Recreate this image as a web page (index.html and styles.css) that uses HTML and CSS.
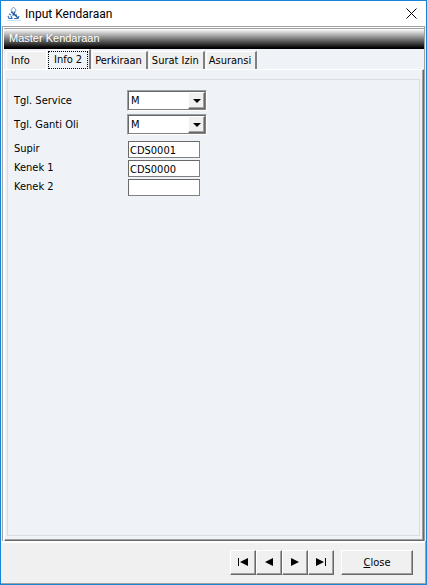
FILE: index.html
```
<!DOCTYPE html>
<html lang="id">
<head>
    <meta charset="UTF-8">
    <meta name="viewport" content="width=device-width, initial-scale=1.0">
    <title>Input Kendaraan</title>
    <link rel="stylesheet" href="styles.css">
</head>
<body>

<div class="window">
    <header class="title-bar">
        <svg class="app-icon" width="16" height="16" viewBox="0 0 16 16" fill="none">
            <path d="M6 1.5L4 4L5 6H8L9 4L7 1.5Z" stroke="#6aa5dc"/>
            <path d="M4 6L7 8L11 12M8 6L6 9L10 9" stroke="#1c4f94" stroke-width="1.2"/>
            <path d="M2 8L4 9M1 10L2 12.5H5L4 10M7 12.5H11L12 10" stroke="#2f75bd" stroke-width="1.2"/>
            <path d="M0 14.5H14" stroke="#bfe3fa"/>
        </svg>
        <span class="title">Input Kendaraan</span>
        <button type="button" class="close-x" aria-label="Tutup">
            <svg width="11" height="11" viewBox="0 0 11 11"><path d="M.5 .5L10.5 10.5M10.5 .5L.5 10.5" stroke="#000"/></svg>
        </button>
    </header>

    <main class="panel">
        <h1>Master Kendaraan</h1>
        <div class="tabs" role="tablist">
            <button type="button" class="tab first" role="tab">Info</button>
            <button type="button" class="tab active" role="tab" aria-selected="true"><span>Info 2</span></button>
            <button type="button" class="tab" role="tab">Perkiraan</button>
            <button type="button" class="tab" role="tab">Surat Izin</button>
            <button type="button" class="tab" role="tab">Asuransi</button>
        </div>
        <div class="tab-page" role="tabpanel">
            <form class="group">
                <div class="row select-row">
                    <label for="service">Tgl. Service</label>
                    <div class="combo">
                        <select id="service" name="service"><option>M</option></select>
                        <span class="arrow"></span>
                    </div>
                </div>
                <div class="row select-row">
                    <label for="oli">Tgl. Ganti Oli</label>
                    <div class="combo">
                        <select id="oli" name="oli"><option>M</option></select>
                        <span class="arrow"></span>
                    </div>
                </div>
                <div class="row input-row">
                    <label for="supir">Supir</label>
                    <input type="text" id="supir" name="supir" value="CDS0001">
                </div>
                <div class="row input-row">
                    <label for="kenek1">Kenek 1</label>
                    <input type="text" id="kenek1" name="kenek1" value="CDS0000">
                </div>
                <div class="row input-row">
                    <label for="kenek2">Kenek 2</label>
                    <input type="text" id="kenek2" name="kenek2">
                </div>
            </form>
        </div>
    </main>

    <footer class="footer">
        <div class="nav">
            <button type="button" class="btn" aria-label="Pertama">
                <svg width="12" height="8" viewBox="0 0 12 8"><path d="M1 0h1v8H1zM11 0v8L3 4z"/></svg>
            </button>
            <button type="button" class="btn" aria-label="Sebelumnya">
                <svg width="12" height="8" viewBox="0 0 12 8"><path d="M10 0v8L2 4z"/></svg>
            </button>
            <button type="button" class="btn" aria-label="Berikutnya">
                <svg width="12" height="8" viewBox="0 0 12 8"><path d="M2 0v8l8-4z"/></svg>
            </button>
            <button type="button" class="btn" aria-label="Terakhir">
                <svg width="12" height="8" viewBox="0 0 12 8"><path d="M1 0v8l8-4zM10 0h1v8h-1z"/></svg>
            </button>
        </div>
        <button type="button" class="btn btn-close"><span><u>C</u>lose</span></button>
    </footer>
</div>

</body>
</html>
```
FILE: styles.css
```
* {
    box-sizing: border-box;
}
body {
    margin: 0;
    font-family: "DejaVu Sans Condensed", Tahoma, sans-serif;
    font-size: 11px;
    line-height: 13px;
    color: #000;
}
button, input, select {
    font: inherit;
    color: inherit;
    margin: 0;
    padding: 0;
    border-radius: 0;
}
.window {
    display: flex;
    flex-direction: column;
    min-height: 100vh;
    border: 1px solid #1883d7;
    background-color: #f0f0f0;
}

/* title bar */
.title-bar {
    display: flex;
    align-items: center;
    height: 25px;
    padding: 0 9px 0 6px;
    background-color: #fff;
}
.title {
    flex: 1;
    margin-left: 2px;
    font-family: Roboto, "Segoe UI", sans-serif;
    font-size: 12px;
    line-height: 16px;
}
.close-x {
    display: flex;
    border: none;
    background: none;
}

/* main panel */
.panel {
    flex: 1;
    display: flex;
    flex-direction: column;
    margin: 0 1px;
    border: 1px solid #a0a0a0;
    border-bottom: none;
    background-color: #eff3f7;
    box-shadow: inset 1px 1px #fff;
    padding: 1px 0 0 1px;
}
h1 {
    height: 21px;
    margin: 0;
    padding: 3px 5px;
    border-top: 1px solid #a0a0a0;
    background: linear-gradient(#fff, #000 95%);
    color: #fff;
    font-family: "Liberation Sans", Arial, sans-serif;
    font-size: 11px;
    font-weight: normal;
}
.tabs {
    display: flex;
    align-items: flex-end;
    height: 20px;
    padding-left: 2px;
}
.tab {
    height: 18px;
    padding: 0 4px 0 2px;
    border: solid #fff;
    border-width: 1px 2px 0 1px;
    border-right-color: #808080;
    background-color: #f0f0f0;
    margin-right: 1px;
}
.tab.first {
    width: 40px;
    padding-left: 4px;
    text-align: left;
    border-right: none;
    margin-right: 0;
}
.tab.active {
    height: 20px;
    padding: 0 1px;
    background-color: #eff3f7;
}
.tab.active span {
    display: block;
    height: 18px;
    padding: 1px 5px 0;
    border: 1px dotted #000;
}
.tab-page {
    flex: 1;
    display: flex;
    border: 1px solid #fff;
    border-right-color: #696969;
    border-bottom-color: #696969;
    box-shadow: inset -1px -1px #a0a0a0;
    padding: 9px 3px 4px 2px;
}
.group {
    flex: 1;
    border: 1px solid #dcdcdc;
    padding: 8px 6px;
}

/* form rows */
.row {
    display: flex;
    align-items: center;
}
.row label {
    width: 113px;
}
.select-row {
    height: 24px;
}
.input-row {
    height: 19px;
    align-items: flex-start;
}
.input-row label {
    padding-top: 1px;
}
.select-row + .input-row {
    margin-top: 5px;
}
.combo {
    position: relative;
    width: 80px;
    height: 21px;
    border: 1px solid;
    border-color: #a0a0a0 #fff #fff #a0a0a0;
}
.combo select {
    display: block;
    width: 100%;
    height: 19px;
    padding: 0 2px;
    appearance: none;
    border: 1px solid;
    border-color: #696969 #808080 #808080 #696969;
    background-color: #fff;
}
.arrow {
    position: absolute;
    top: 1px;
    right: 1px;
    width: 17px;
    height: 17px;
    border: 1px solid;
    border-color: #fff #696969 #696969 #fff;
    box-shadow: inset -1px -1px #a0a0a0;
    background-color: #f0f0f0;
    pointer-events: none;
}
.arrow::after {
    content: "";
    position: absolute;
    left: 4px;
    top: 6px;
    border: solid transparent;
    border-width: 4px 4px 0;
    border-top-color: #000;
}
.input-row input {
    width: 72px;
    height: 17px;
    margin-left: 1px;
    padding: 1px 1px 0;
    border: 1px solid;
    border-color: #696969 #808080 #808080 #696969;
    background-color: #fff;
}

/* buttons at the bottom */
.footer {
    display: flex;
    justify-content: flex-end;
    gap: 7px;
    height: 43px;
    padding: 9px 12px 0 0;
    border: 1px solid #a0a0a0;
    border-width: 0 1px 1px 0;
    box-shadow: inset 0 2px #fff;
}
.nav {
    display: flex;
}
.btn {
    display: flex;
    align-items: center;
    justify-content: center;
    width: 26px;
    height: 25px;
    padding-bottom: 1px;
    border: 1px solid;
    border-color: #fff #696969 #696969 #fff;
    box-shadow: inset -1px -1px #a0a0a0;
    background-color: #f0f0f0;
}
.btn-close {
    width: 72px;
}
```
